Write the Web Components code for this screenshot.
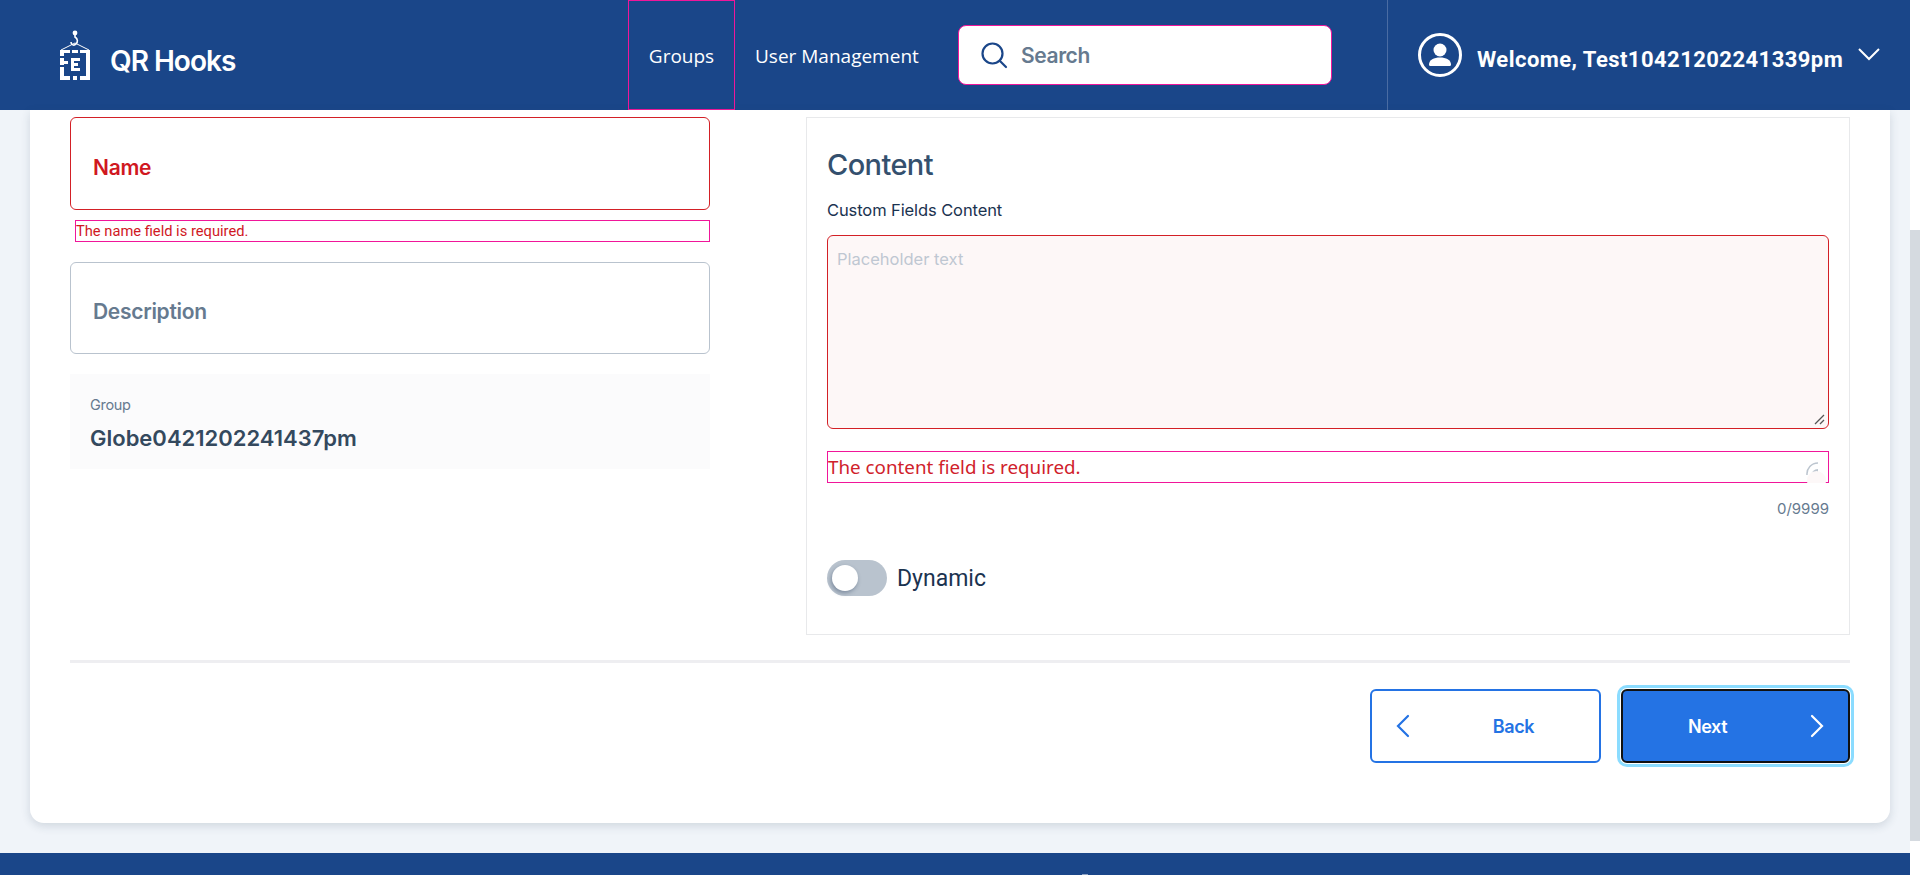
<!DOCTYPE html>
<html lang="en">
<head>
<meta charset="utf-8">
<title>QR Hooks</title>
<style>
    html, body { margin: 0; height: 875px; overflow: hidden; background: #fff; }
</style>
</head>
<body>
<qr-shell>
    <qr-header slot="header"></qr-header>
    <qr-form-card>
        <div slot="left">
            <qr-text-field label="Name" error="The name field is required."></qr-text-field>
            <qr-text-field label="Description"></qr-text-field>
            <qr-readonly-field label="Group" value="Globe0421202241437pm"></qr-readonly-field>
        </div>
        <qr-content-panel slot="right"></qr-content-panel>
        <qr-button slot="actions" kind="back">Back</qr-button>
        <qr-button slot="actions" kind="next">Next</qr-button>
    </qr-form-card>
</qr-shell>

<script>
class Shell extends HTMLElement {
    constructor() {
        super();
        this.attachShadow({ mode: 'open' });
        this.shadowRoot.innerHTML = `
            <style>
                :host {
                    display: flex;
                    width: 1920px;
                    height: 875px;
                    overflow: hidden;
                    font-family: "Inter", "Liberation Sans", sans-serif;
                }
                #page {
                    width: 1910px;
                    display: flex;
                    flex-direction: column;
                    background: #f0f4f9;
                }
                #main {
                    height: 713px;
                    padding: 0 20px 0 30px;
                }
                #footer {
                    flex: 1;
                    margin-top: 30px;
                    background: #1a4689;
                    display: flex;
                    justify-content: center;
                    padding-left: 260px;
                    align-items: flex-end;
                    box-sizing: border-box;
                }
                #footer i {
                    width: 6px;
                    height: 1px;
                    background: #8ea3c4;
                }
                #rail {
                    width: 10px;
                    background: #fff;
                    padding-top: 230px;
                    box-sizing: border-box;
                }
                #thumb {
                    height: 611px;
                    background: #d5dae0;
                }
            </style>
            <div id="page">
                <slot name="header"></slot>
                <div id="main"><slot></slot></div>
                <div id="footer"><i></i></div>
            </div>
            <div id="rail"><div id="thumb"></div></div>
        `;
    }
}

class Header extends HTMLElement {
    constructor() {
        super();
        this.attachShadow({ mode: 'open' });
        this.shadowRoot.innerHTML = `
            <style>
                :host {
                    display: flex;
                    align-items: stretch;
                    height: 110px;
                    background: #1a4689;
                    color: #fff;
                }
                #brand {
                    display: flex;
                    align-items: center;
                    gap: 20px;
                    width: 628px;
                    padding-left: 60px;
                    box-sizing: border-box;
                }
                #brand span {
                    margin-top: 12px;
                    font: 600 28px "Inter", sans-serif;
                    letter-spacing: -1px;
                }
                nav {
                    display: flex;
                    font: 19px "Open Sans", sans-serif;
                }
                nav a {
                    display: flex;
                    align-items: center;
                    box-sizing: border-box;
                    height: 110px;
                    padding-top: 2px;
                }
                #groups {
                    justify-content: center;
                    width: 107px;
                    border: 1px solid #f0169a;
                }
                #users { width: 223px; padding-left: 20px; }
                #search {
                    display: flex;
                    align-items: center;
                    gap: 13px;
                    align-self: center;
                    box-sizing: border-box;
                    width: 374px;
                    height: 60px;
                    padding-left: 21px;
                    background: #fff;
                    border: 1px solid #f0169a;
                    border-radius: 8px;
                    color: #667a8f;
                    font: 600 21px "Inter", sans-serif;
                    letter-spacing: -0.4px;
                }
                #user {
                    display: flex;
                    align-items: center;
                    box-sizing: border-box;
                    margin-left: 55px;
                    padding-left: 30px;
                    flex: 1;
                    border-left: 1px solid #4a6ca3;
                }
                #user span {
                    margin: 8px 0 0 15px;
                    font: 700 22px "Roboto", sans-serif;
                    letter-spacing: 0.45px;
                    white-space: nowrap;
                }
                #user svg:last-child { margin-left: 15px; margin-top: -3px; }
            </style>
            <div id="brand">
                <svg width="30" height="50" viewBox="0 0 30 50">
                    <g fill="none" stroke="#fff">
                        <path d="M15 4v3c3 2 3 5 1 7s-5 1-5-2" stroke-width="1.6"/>
                        <path d="M1 20L15 13l14 7" stroke-width="1"/>
                    </g>
                    <circle cx="15" cy="3" r="2.4" fill="#fff"/>
                    <path fill="#fff" d="M0 20h10v3H4v3H0zM12 20h6v3h-6zM20 20h10v30H20v-4h6V23h-6zM0 28h4v3h4v3H4v1H0zM0 37h4v9h6v4H0zM13 46h4v4h-4zM11 28h9v3h-6v2h4v3h-4v2h6v3h-9z"/>
                </svg>
                <span>QR Hooks</span>
            </div>
            <nav>
                <a id="groups">Groups</a>
                <a id="users">User Management</a>
            </nav>
            <div id="search">
                <svg width="28" height="28" viewBox="0 0 28 28" fill="none" stroke="#1a4689" stroke-width="2.2">
                    <circle cx="12.5" cy="12.5" r="10"/>
                    <path d="M20 20l6 6" stroke-linecap="round"/>
                </svg>
                Search
            </div>
            <div id="user">
                <svg width="44" height="44" viewBox="0 0 44 44" fill="#fff">
                    <circle cx="22" cy="22" r="20.5" fill="none" stroke="#fff" stroke-width="3"/>
                    <circle cx="22" cy="17" r="6.5"/>
                    <path d="M11 31.500c0-4.500 5-7 11-7s11 2.500 11 7c0 1-.8 1.500-1.500 1.500h-19c-.7 0-1.500-.5-1.500-1.500z"/>
                </svg>
                <span>Welcome, Test10421202241339pm</span>
                <svg width="22" height="14" viewBox="0 0 22 14" fill="none" stroke="#fff" stroke-width="2">
                    <path d="M1 2l10 10L21 2"/>
                </svg>
            </div>
        `;
    }
}

class FormCard extends HTMLElement {
    constructor() {
        super();
        this.attachShadow({ mode: 'open' });
        this.shadowRoot.innerHTML = `
            <style>
                :host {
                    display: block;
                    box-sizing: border-box;
                    width: 1860px;
                    height: 713px;
                    padding: 7px 40px 0;
                    background: #fff;
                    border-radius: 0 0 14px 14px;
                    box-shadow: 0 3px 10px rgba(40, 60, 90, 0.16);
                }
                #cols {
                    display: flex;
                    justify-content: space-between;
                    height: 518px;
                }
                #left { width: 640px; }
                #right { width: 1044px; }
                #rule {
                    margin-top: 25px;
                    height: 3px;
                    background: #eeeef1;
                }
                #actions {
                    display: flex;
                    justify-content: flex-end;
                    gap: 20px;
                    margin-top: 26px;
                }
            </style>
            <div id="cols">
                <div id="left"><slot name="left"></slot></div>
                <div id="right"><slot name="right"></slot></div>
            </div>
            <div id="rule"></div>
            <div id="actions"><slot name="actions"></slot></div>
        `;
    }
}

class TextField extends HTMLElement {
    constructor() {
        super();
        this.attachShadow({ mode: 'open' });
        const error = this.getAttribute('error');
        this.shadowRoot.innerHTML = `
            <style>
                :host {
                    display: block;
                    margin-bottom: 20px;
                }
                #box {
                    display: flex;
                    align-items: center;
                    box-sizing: border-box;
                    height: ${error ? 93 : 92}px;
                    padding: 7px 22px 0;
                    border: 1px solid ${error ? '#d32026' : '#b9c3ce'};
                    border-radius: 6px;
                    color: ${error ? '#d0181f' : '#667a8f'};
                    font: 600 21px "Inter", sans-serif;
                    letter-spacing: -0.3px;
                }
                #error {
                    box-sizing: border-box;
                    height: 22px;
                    margin: 10px 0 0 5px;
                    border: 1px solid #f0169a;
                    color: #d0181f;
                    font: 14.7px/20px "Roboto", sans-serif;
                }
            </style>
            <div id="box">${this.getAttribute('label')}</div>
            ${error ? `<div id="error">${error}</div>` : ''}
        `;
    }
}

class ReadonlyField extends HTMLElement {
    constructor() {
        super();
        this.attachShadow({ mode: 'open' });
        this.shadowRoot.innerHTML = `
            <style>
                :host {
                    display: block;
                    box-sizing: border-box;
                    height: 95px;
                    padding: 21px 20px 0;
                    background: #fbfbfc;
                }
                #label {
                    color: #667a8f;
                    font: 14.5px/20px "Inter", sans-serif;
                    letter-spacing: -0.3px;
                }
                #value {
                    margin-top: 9px;
                    color: #34495e;
                    font: 600 22px/28px "Inter", sans-serif;
                }
            </style>
            <div id="label">${this.getAttribute('label')}</div>
            <div id="value">${this.getAttribute('value')}</div>
        `;
    }
}

class ContentPanel extends HTMLElement {
    constructor() {
        super();
        this.attachShadow({ mode: 'open' });
        this.shadowRoot.innerHTML = `
            <style>
                :host {
                    display: block;
                    box-sizing: border-box;
                    height: 518px;
                    padding: 29px 20px 0 20px;
                    border: 1px solid #e8e9eb;
                }
                h2 {
                    margin: 0;
                    color: #34506e;
                    font: 500 29px/36px "Inter", sans-serif;
                    letter-spacing: -0.6px;
                }
                #caption {
                    margin-top: 15px;
                    color: #1b3350;
                    font: 16.500px/24px "Inter", sans-serif;
                    letter-spacing: -0.1px;
                }
                #area {
                    position: relative;
                    box-sizing: border-box;
                    height: 194px;
                    margin-top: 13px;
                    padding: 11px 9px;
                    background: #fdf7f7;
                    border: 1px solid #d32026;
                    border-radius: 6px;
                    color: #bfc7d2;
                    font: 16.500px/24px "Inter", sans-serif;
                }
                #grip {
                    position: absolute;
                    right: 1px;
                    bottom: 1px;
                }
                #error {
                    position: relative;
                    box-sizing: border-box;
                    height: 32px;
                    margin-top: 22px;
                    border: 1px solid #f0169a;
                    color: #d0212b;
                    font: 18.800px/30px "Noto Sans", sans-serif;
                }
                #spinner {
                    position: absolute;
                    right: 0;
                    bottom: -1px;
                }
                #count {
                    margin-top: 16px;
                    text-align: right;
                    color: #667a8f;
                    font: 15px/20px "Inter", sans-serif;
                }
                #dynamic {
                    display: flex;
                    align-items: center;
                    gap: 10px;
                    margin-top: 39px;
                    color: #1b3350;
                    font: 23px/36px "Roboto", sans-serif;
                }
                #dynamic span { padding-top: 3px; }
                #switch {
                    position: relative;
                    width: 60px;
                    height: 36px;
                    border-radius: 18px;
                    background: #b9c3ce;
                }
                #switch i {
                    position: absolute;
                    left: 5px;
                    top: 5px;
                    width: 26px;
                    height: 26px;
                    border-radius: 50%;
                    background: #fff;
                    box-shadow: -1px 2px 4px rgba(50, 70, 100, 0.45);
                }
            </style>
            <h2>Content</h2>
            <div id="caption">Custom Fields Content</div>
            <div id="area">
                Placeholder text
                <svg id="grip" width="14" height="14" viewBox="0 0 14 14" stroke="#555" stroke-width="1.300" fill="none">
                    <path d="M2 11L11 2M7 11l4-4"/>
                </svg>
            </div>
            <div id="error">The content field is required.
                <svg id="spinner" width="22" height="22" viewBox="0 0 22 22">
                    <path d="M1 14a11 11 0 0 1 11-12" fill="none" stroke="#bcc5cf" stroke-width="1.500"/>
                    <path d="M5 15a7 7 0 0 1 7-7v7z" fill="#bcc5cf"/>
                    <circle cx="10.500" cy="19.500" r="9.500" fill="#fdf8f8"/>
                </svg>
            </div>
            <div id="count">0/9999</div>
            <div id="dynamic">
                <div id="switch"><i></i></div>
                <span>Dynamic</span>
            </div>
        `;
    }
}

class ActionButton extends HTMLElement {
    constructor() {
        super();
        this.attachShadow({ mode: 'open' });
        const isNext = this.getAttribute('kind') === 'next';
        const chevron = isNext ? 'M2 2l10 10L2 22' : 'M12 2L2 12l10 10';
        this.shadowRoot.innerHTML = `
            <style>
                :host {
                    display: flex;
                    align-items: center;
                    box-sizing: border-box;
                    width: ${isNext ? 229 : 231}px;
                    height: 74px;
                    padding: 0 24px;
                    border: 2px solid ${isNext ? '#111' : '#2473e4'};
                    border-radius: 6px;
                    color: ${isNext ? '#fff' : '#2473e4'};
                    background: ${isNext ? '#2473e4' : '#fff'};
                    font: 600 18px "Inter", sans-serif;
                    letter-spacing: -0.4px;
                    ${isNext ? 'box-shadow: 0 0 0 1px #fff, 0 0 0 4px #8bdcff;' : ''}
                }
                span {
                    flex: 1;
                    text-align: center;
                    order: ${isNext ? 0 : 1};
                    ${isNext ? 'padding-right: 42px;' : 'padding-left: 42px;'}
                }
                svg { order: ${isNext ? 1 : 0}; }
            </style>
            <svg width="14" height="24" viewBox="0 0 14 24" fill="none" stroke="${isNext ? '#fff' : '#2473e4'}" stroke-width="2.200" stroke-linecap="round">
                <path d="${chevron}"/>
            </svg>
            <span><slot></slot></span>
        `;
    }
}

customElements.define('qr-shell', Shell);
customElements.define('qr-header', Header);
customElements.define('qr-form-card', FormCard);
customElements.define('qr-text-field', TextField);
customElements.define('qr-readonly-field', ReadonlyField);
customElements.define('qr-content-panel', ContentPanel);
customElements.define('qr-button', ActionButton);
</script>
</body>
</html>
